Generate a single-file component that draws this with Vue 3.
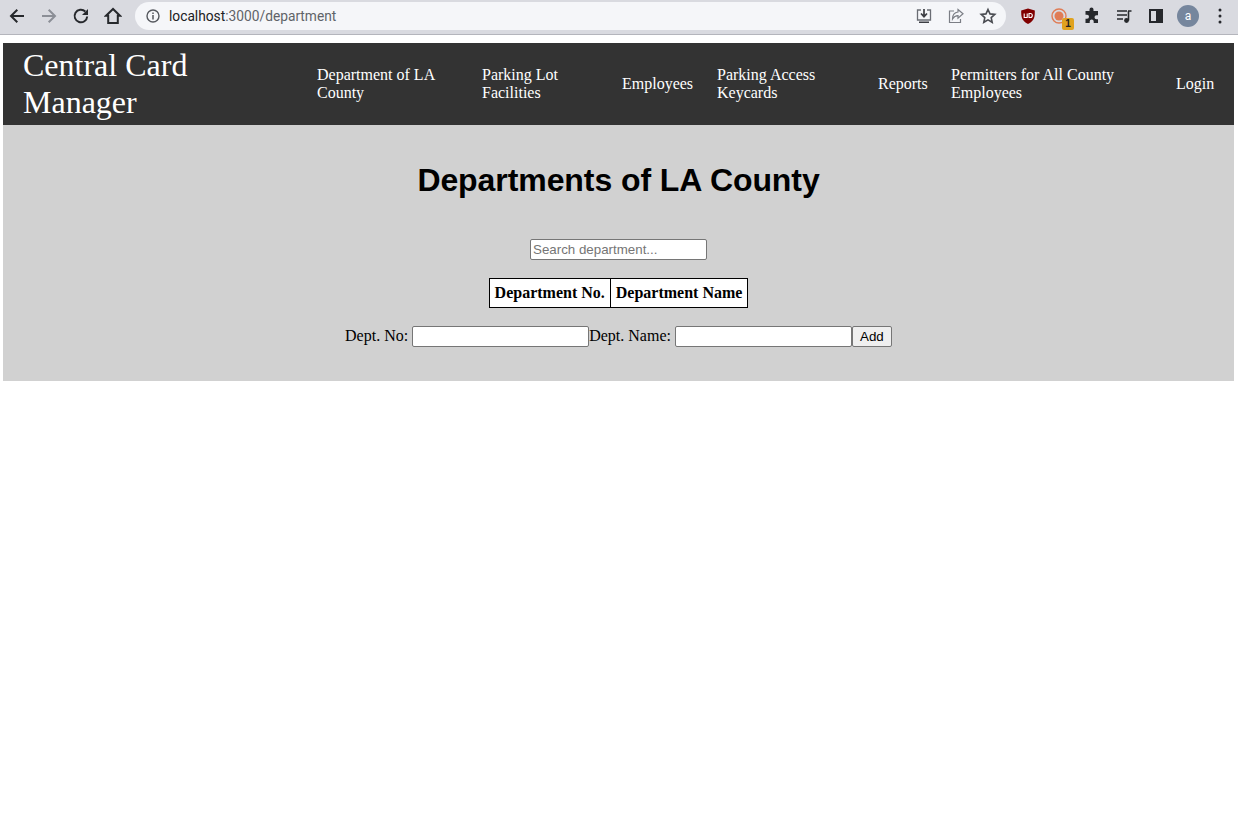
<template>
  <div class="browser">
    <div class="toolbar">
      <div class="nav-icons">
        <span class="slot"><svg class="tb-icon" viewBox="0 0 18 18"><path d="M16 9H3.500M9.300 2.700 3 9l6.300 6.300" fill="none" stroke="#26282c" stroke-width="2"/></svg></span>
        <span class="slot"><svg class="tb-icon" viewBox="0 0 18 18"><path d="M2 9h12.500M8.700 2.700 15 9l-6.300 6.300" fill="none" stroke="#8b8e96" stroke-width="2"/></svg></span>
        <span class="slot"><svg class="tb-icon" viewBox="0 0 18 18"><path d="M15.200 9.500a6.300 6.300 0 1 1-1.900-5" fill="none" stroke="#26282c" stroke-width="2"/><path d="M16 2v6h-6z" fill="#26282c"/></svg></span>
        <span class="slot"><svg class="tb-icon" viewBox="0 0 18 18"><path d="M9 2 2 8.800h2.200v7.200h9.600V8.800H16z" fill="none" stroke="#26282c" stroke-width="2"/></svg></span>
      </div>
      <div class="omnibox">
        <svg class="info" viewBox="0 0 16 16"><circle cx="8" cy="8" r="6" fill="none" stroke="#55585e" stroke-width="1.400"/><path d="M8 7v4.500M8 4.500v1.400" stroke="#55585e" stroke-width="1.500"/></svg>
        <span class="url">localhost<span class="url-dim">:3000/department</span></span>
        <div class="omni-actions">
          <span class="slot"><svg class="omni-icon" viewBox="0 0 18 18"><path d="M6 3H2.500v10h13V3H12" fill="none" stroke="#6a6d74" stroke-width="1.300"/><path d="M9 2v7.500M6 6.500l3 3.200 3-3.200" fill="none" stroke="#3c3e44" stroke-width="1.700"/><path d="M4 14.500h10V16H4z" fill="#3c3e44"/></svg></span>
          <span class="slot"><svg class="omni-icon" viewBox="0 0 18 18"><path d="M7 4H2.500v11.500h11V12" fill="none" stroke="#7b7e85" stroke-width="1.200"/><path d="M11 2.500l5 4.300-5 4.300V8.700C8.500 8.700 6.800 9.800 5.500 12c0-4 2.200-6.600 5.500-7z" fill="none" stroke="#7b7e85" stroke-width="1.200"/></svg></span>
          <span class="slot"><svg class="omni-icon" viewBox="0 0 18 18"><path d="m9 2.500 2 4.400 4.800.5-3.600 3.200 1 4.700L9 12.900l-4.200 2.400 1-4.700-3.600-3.200 4.800-.5z" fill="none" stroke="#4a4c52" stroke-width="1.600"/></svg></span>
        </div>
      </div>
      <div class="extensions">
        <span class="slot"><svg class="ext" viewBox="0 0 18 18"><path d="M9 1.500 15.800 3.500c0 6 0 10-6.800 13.500C2.200 13.500 2.200 9.500 2.200 3.500z" fill="#800000"/><path d="M5.200 6.500v4h3v-4M10 6.500v4h1.300a2 2 0 0 0 0-4z" fill="none" stroke="#fff" stroke-width="1.100"/></svg></span>
        <span class="slot">
          <span class="ext ext-rec">
            <svg class="ext" viewBox="0 0 18 18"><circle cx="8" cy="9" r="7" fill="none" stroke="#e07c55" stroke-width="1.400"/><circle cx="8" cy="9" r="4.500" fill="#e07c55"/></svg>
            <span class="ext-badge">1</span>
          </span>
        </span>
        <span class="slot"><svg class="ext" viewBox="0 0 18 18"><path d="M6.500 2.500a2 2 0 0 1 4 0V4H15v4.300h-1.500a2 2 0 0 0 0 4H15V16h-4.300v-1.500a2 2 0 0 0-4 0V16H2.500v-4.200H4a2 2 0 0 0 0-4H2.500V4h4z" fill="#26282c"/></svg></span>
        <span class="slot"><svg class="ext" viewBox="0 0 18 18"><path d="M2 4h10M2 8h10M2 12h6" stroke="#26282c" stroke-width="1.500"/><path d="M13.500 4v9.500M13 4h3.500" stroke="#26282c" stroke-width="1.600"/><circle cx="11.500" cy="13.500" r="2.400" fill="#26282c"/></svg></span>
        <span class="slot"><svg class="ext" viewBox="0 0 18 18"><path d="M3 3h12v12H3z" fill="none" stroke="#26282c" stroke-width="2"/><path d="M9 3h6v12H9z" fill="#26282c"/></svg></span>
        <span class="slot"><span class="avatar">a</span></span>
        <span class="slot"><svg class="menu-dots" viewBox="0 0 6 18"><circle cx="3" cy="3" r="1.500" fill="#26282c"/><circle cx="3" cy="9" r="1.500" fill="#26282c"/><circle cx="3" cy="15" r="1.500" fill="#26282c"/></svg></span>
      </div>
    </div>

    <div class="page">
      <header class="site-nav">
        <div class="brand">Central Card Manager</div>
        <a v-for="link in links" :key="link.label" class="nav-link" :style="{ width: link.width + 'px' }">{{ link.label }}</a>
      </header>

      <main class="content">
        <h1>Departments of LA County</h1>
        <input class="search" type="text" placeholder="Search department..." />
        <table class="dept-table">
          <thead>
            <tr>
              <th>Department No.</th>
              <th>Department Name</th>
            </tr>
          </thead>
        </table>
        <form class="add-form" @submit.prevent>
          <label>Dept. No: </label>
          <input type="text" />
          <label>Dept. Name: </label>
          <input type="text" />
          <button type="submit">Add</button>
        </form>
      </main>
    </div>
  </div>
</template>

<script setup>
const links = [
  { label: 'Department of LA County', width: 165 },
  { label: 'Parking Lot Facilities', width: 140 },
  { label: 'Employees', width: 95 },
  { label: 'Parking Access Keycards', width: 161 },
  { label: 'Reports', width: 73 },
  { label: 'Permitters for All County Employees', width: 225 },
  { label: 'Login', width: 70 },
];
</script>

<style>
html,
body {
  margin: 0;
  background: #fff;
}
</style>

<style scoped>
.browser {
  font-family: "Liberation Serif", serif;
  color: #000;
}

.toolbar {
  height: 35px;
  box-sizing: border-box;
  padding: 0 0 3px 1px;
  background: #d9dae0;
  border-bottom: 1px solid #b4b5bc;
  display: flex;
  align-items: center;
}

.slot {
  width: 32px;
  height: 28px;
  display: flex;
  align-items: center;
  justify-content: center;
  flex: none;
}

.nav-icons {
  display: flex;
  width: 134px;
}

.tb-icon {
  width: 18px;
  height: 18px;
}

.omnibox {
  width: 871px;
  height: 28px;
  background: #f5f6f9;
  border-radius: 14px;
  display: flex;
  align-items: center;
  padding: 0 2px 0 10px;
  box-sizing: border-box;
}

.info {
  width: 16px;
  height: 16px;
}

.url {
  font-family: "Roboto", "Liberation Sans", sans-serif;
  font-size: 13.75px;
  color: #202124;
  margin-left: 8px;
}

.url-dim {
  color: #5f6368;
}

.omni-actions {
  margin-left: auto;
  display: flex;
}

.omni-icon {
  width: 18px;
  height: 18px;
}

.extensions {
  display: flex;
  align-items: center;
  margin-left: 6px;
}

.ext {
  width: 18px;
  height: 18px;
  display: block;
}

.ext-rec {
  position: relative;
}

.ext-badge {
  position: absolute;
  left: 11px;
  top: 11px;
  width: 12px;
  height: 12px;
  background: #e0a21e;
  border-radius: 2px;
  font: bold 10px/12px "Liberation Sans", sans-serif;
  text-align: center;
  color: #222;
}

.avatar {
  width: 22px;
  height: 22px;
  border-radius: 50%;
  background: #76869d;
  color: #fff;
  font: 12px/22px "Roboto", sans-serif;
  text-align: center;
}

.menu-dots {
  width: 6px;
  height: 18px;
}

.page {
  padding: 8px 4px 0 3px;
}

.site-nav {
  background: #333;
  color: #fff;
  height: 82px;
  display: flex;
  align-items: center;
}

.brand {
  font-size: 32px;
  line-height: 37px;
  width: 302px;
  padding-left: 20px;
  padding-right: 60px;
  box-sizing: border-box;
}

.nav-link {
  font-size: 16px;
  line-height: 18px;
  padding-left: 12px;
  padding-right: 12px;
  box-sizing: border-box;
  display: block;
  flex: none;
}

.content {
  background: #d1d1d1;
  height: 256px;
  box-sizing: border-box;
  padding-top: 37px;
  display: flex;
  flex-direction: column;
  align-items: center;
}

h1 {
  font-family: "Liberation Sans", sans-serif;
  font-size: 32px;
  line-height: 37px;
  font-weight: 700;
  letter-spacing: -0.08px;
  margin: 0 0 40px;
}

input {
  width: 177px;
  height: 21px;
  box-sizing: border-box;
  border: 1px solid #767676;
  border-radius: 2px;
  background: #fff;
  padding: 1px 2px;
  font-family: "Liberation Sans", sans-serif;
  font-size: 13.33px;
  margin: 0;
}

input::placeholder {
  color: #757575;
}

.search {
  margin-bottom: 18px;
}

.dept-table {
  border-collapse: collapse;
  background: #fff;
  margin-bottom: 18px;
}

.dept-table th {
  border: 1px solid #000;
  padding: 5px;
  font-size: 16px;
  line-height: 18px;
  font-weight: 700;
}

.add-form {
  display: flex;
  align-items: center;
  font-size: 16px;
  height: 21px;
}

.add-form label {
  white-space: pre;
  padding-bottom: 2px;
}

button {
  height: 21px;
  width: 40px;
  box-sizing: border-box;
  border: 1px solid #767676;
  border-radius: 2px;
  background: #efefef;
  font-family: "Liberation Sans", sans-serif;
  font-size: 13.33px;
  padding: 0;
  color: #000;
}
</style>
